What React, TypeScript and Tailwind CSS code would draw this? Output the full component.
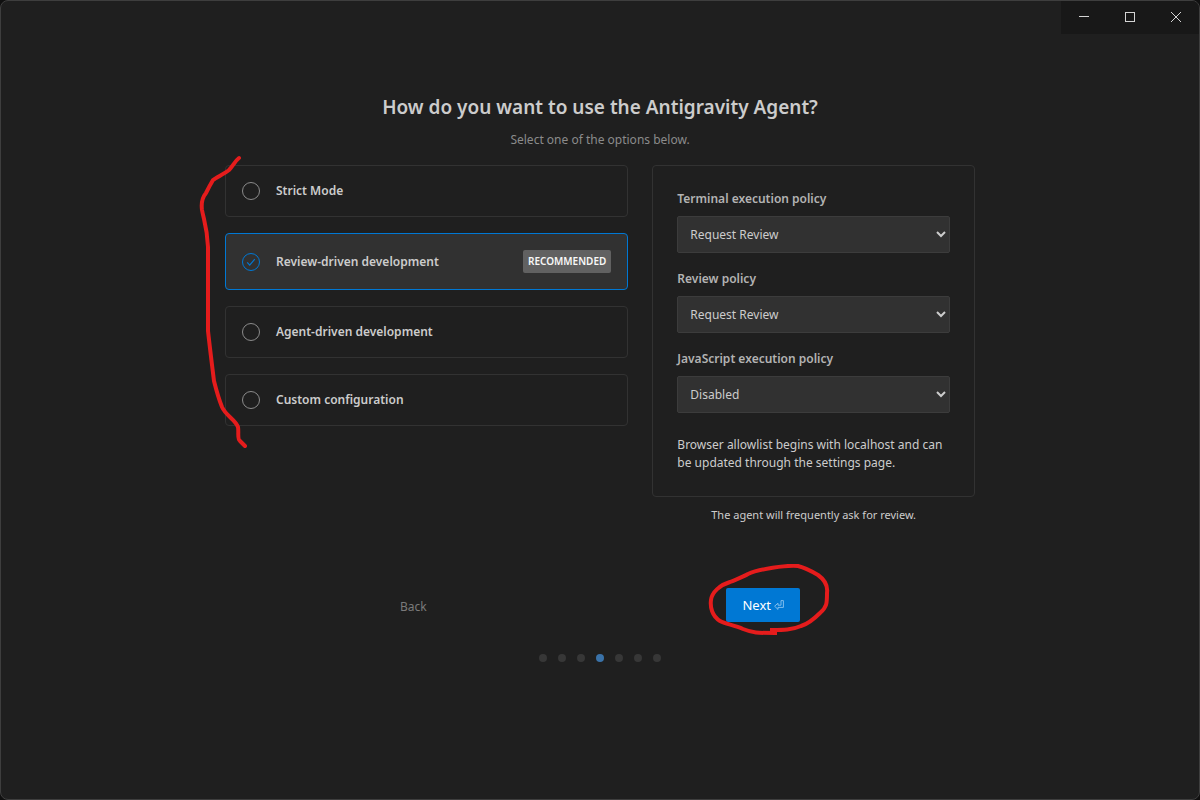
import { useState } from 'react'
import clsx from 'clsx'

const MODES = [
  { id: 'strict', label: 'Strict Mode' },
  { id: 'review', label: 'Review-driven development', recommended: true },
  { id: 'agent', label: 'Agent-driven development' },
  { id: 'custom', label: 'Custom configuration' },
]

const POLICIES = [
  { id: 'terminal', label: 'Terminal execution policy', value: 'Request Review', options: ['Request Review', 'Always Proceed'] },
  { id: 'review-policy', label: 'Review policy', value: 'Request Review', options: ['Request Review', 'Always Proceed'] },
  { id: 'javascript', label: 'JavaScript execution policy', value: 'Disabled', options: ['Disabled', 'Request Review', 'Always Proceed'] },
]

const STEPS = 7
const CURRENT_STEP = 3

function WindowControls() {
  return (
    <div className="flex self-end bg-[#181818] text-[#d4d4d4]">
      <button aria-label="Minimize" className="flex h-[33px] w-[46px] items-center justify-center pb-px">
        <svg width="10" height="10" viewBox="0 0 10 10" stroke="currentColor" shapeRendering="crispEdges">
          <path d="M0 4.5h10" />
        </svg>
      </button>
      <button aria-label="Maximize" className="flex h-[33px] w-[46px] items-center justify-center pb-px">
        <svg width="10" height="10" viewBox="0 0 10 10" fill="none" stroke="currentColor">
          <rect x="0.5" y="0.5" width="9" height="9" />
        </svg>
      </button>
      <button aria-label="Close" className="flex h-[33px] w-[46px] items-center justify-center pb-px">
        <svg width="10" height="10" viewBox="0 0 10 10" stroke="currentColor">
          <path d="M0 0l10 10M10 0L0 10" />
        </svg>
      </button>
    </div>
  )
}

interface ModeOptionProps {
  id: string
  label: string
  recommended?: boolean
  checked: boolean
  onSelect: () => void
}

function ModeOption({ id, label, recommended, checked, onSelect }: ModeOptionProps) {
  return (
    <label
      htmlFor={id}
      className={clsx(
        'flex items-center gap-4 rounded border p-4 cursor-pointer',
        checked ? 'border-[#0078d4] bg-[#313131]' : 'border-[#323232]'
      )}
    >
      <span className="relative size-[18px] shrink-0">
        <input
          id={id}
          type="radio"
          name="mode"
          checked={checked}
          onChange={onSelect}
          className="block size-[18px] appearance-none rounded-full border border-[#8b8b8b] checked:border-[#0078d4]"
        />
        {checked && (
          <svg className="pointer-events-none absolute inset-0" width="18" height="18" viewBox="0 0 18 18" fill="none" stroke="#0078d4" strokeWidth="1.2">
            <path d="M5.2 9.4l2.5 2.8 5.1-6" />
          </svg>
        )}
      </span>
      <span className="text-[12px] leading-[18px] font-semibold text-[#cccccc]">{label}</span>
      {recommended && (
        <span className="ml-auto rounded-xs bg-[#616161] px-[5px] text-[10px] leading-[23px] font-semibold text-[#f8f8f8]">
          RECOMMENDED
        </span>
      )}
    </label>
  )
}

export default function App() {
  const [mode, setMode] = useState('review')

  return (
    <div className="min-h-screen bg-[#101010] font-['Noto_Sans','Open_Sans',sans-serif]">
      <div className="flex min-h-screen flex-col overflow-hidden rounded-lg border border-[#3e3e3e] bg-[#1f1f1f]">
        <WindowControls />

        <main className="mx-auto flex w-full max-w-[750px] flex-col pt-[58px]">
          <h1 className="text-center text-[19px] leading-[30px] font-semibold text-[#cccccc]">
            How do you want to use the Antigravity Agent?
          </h1>
          <p className="mt-2 text-center text-[12px] leading-[20px] text-[#8b8b8b]">Select one of the options below.</p>

          <div className="mt-[15px] grid grid-cols-[5fr_4fr] gap-6">
            <div className="relative flex flex-col gap-4">
              {MODES.map((m) => (
                <ModeOption key={m.id} {...m} checked={mode === m.id} onSelect={() => setMode(m.id)} />
              ))}
              <svg
                className="pointer-events-none absolute -top-3 -left-7"
                width="56"
                height="300"
                viewBox="0 0 56 300"
                fill="none"
                stroke="#e51c1c"
                strokeWidth="4"
                strokeLinecap="round"
                strokeLinejoin="round"
              >
                <path d="M42 5C38 8 36 13 32 17C27 21 20 24 16 27C13 32 11 36 9 40C5 45 4 50 5 57C7 68 10 73 11 94L11 178C13 196 15 212 17 228C19 236 21 244 25 254C29 263 38 266 41 274C42 280 40 286 43 288L48 293" />
              </svg>
            </div>

            <div>
              <div className="rounded border border-[#323232] p-6">
                <div className="flex flex-col gap-[17px]">
                  {POLICIES.map((p) => (
                    <div key={p.id} className="flex flex-col gap-2">
                      <label htmlFor={p.id} className="text-[12px] leading-[18px] font-semibold text-[#b3b3b3]">
                        {p.label}
                      </label>
                      <select
                        id={p.id}
                        defaultValue={p.value}
                        className="h-[37px] w-full rounded-xs border border-[#3c3c3c] bg-[#313131] px-2 text-[12px] text-[#cccccc]"
                      >
                        {p.options.map((o) => (
                          <option key={o}>{o}</option>
                        ))}
                      </select>
                    </div>
                  ))}
                </div>
                <p className="mt-[23px] text-[12px] leading-[18px] text-[#cccccc]">
                  Browser allowlist begins with localhost and can be updated through the settings page.
                </p>
              </div>
              <p className="mt-2 text-center text-[11px] leading-[19px] text-[#cccccc]">
                The agent will frequently ask for review.
              </p>
            </div>
          </div>

          <div className="mx-auto mt-16 flex w-full max-w-[400px] items-center justify-between text-[12px] leading-[18px]">
            <button className="pt-1 text-[#7a7a7a]">Back</button>
            <div className="relative">
              <button className="flex h-[34px] items-center gap-[3px] rounded-xs bg-[#0078d4] px-4 text-[13px] text-white">
                Next
                <svg width="10" height="10" viewBox="0 0 10 10" fill="none" stroke="#8cc4ef" strokeWidth="0.9" strokeLinejoin="round">
                  <path d="M7 .6h2.4v6.8H4V9.4L.6 6.2 4 3.2v2h3z" />
                </svg>
              </button>
              <svg
                className="pointer-events-none absolute -top-6 -left-5"
                width="128"
                height="74"
                viewBox="0 0 128 74"
                fill="none"
                stroke="#e51c1c"
                strokeWidth="4"
                strokeLinecap="square"
                strokeLinejoin="round"
              >
                <path d="M69 69C51 69 47 69 37 65C28 61 19 60 14 57C6 52 4 43 5 36C6 28 14 21 24 18C31 15 37 13 42 10C53 5 80 1 92 2C100 4 107 8 112 11C119 16 122 22 121 29C121 39 121 43 114 49C109 54 102 60 95 62C86 66 77 66 66 66" />
              </svg>
            </div>
          </div>

          <div className="mt-8 flex justify-center gap-[11px]">
            {Array.from({ length: STEPS }, (_, i) => (
              <span key={i} className={clsx('size-2 rounded-full', i === CURRENT_STEP ? 'bg-[#3a72a8]' : 'bg-[#373737]')} />
            ))}
          </div>
        </main>
      </div>
    </div>
  )
}
